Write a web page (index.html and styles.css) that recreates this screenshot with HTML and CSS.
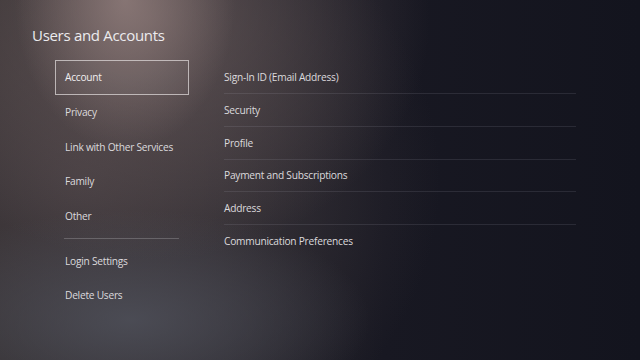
FILE: index.html
```html
<!DOCTYPE html>
<html>
<head>
<meta charset="utf-8">
<link rel="stylesheet" href="styles.css">
</head>
<body>
<div class="screen">
  <h1 class="title">Users and Accounts</h1>
  <div class="content">
    <nav class="menu">
      <div class="menu-item selected">Account</div>
      <div class="menu-item">Privacy</div>
      <div class="menu-item">Link with Other Services</div>
      <div class="menu-item">Family</div>
      <div class="menu-item">Other</div>
      <div class="menu-sep"></div>
      <div class="menu-item">Login Settings</div>
      <div class="menu-item">Delete Users</div>
    </nav>
    <div class="list">
      <div class="row">Sign-In ID (Email Address)</div>
      <div class="row">Security</div>
      <div class="row">Profile</div>
      <div class="row">Payment and Subscriptions</div>
      <div class="row">Address</div>
      <div class="row last">Communication Preferences</div>
    </div>
  </div>
</div>
</body>
</html>
```
FILE: styles.css
```css
html, body {
  margin: 0;
  padding: 0;
}
body {
  width: 640px;
  height: 360px;
  overflow: hidden;
  font-family: "Open Sans", "Noto Sans", sans-serif;
  color: #e6e4e6;
}
.screen {
  width: 640px;
  height: 360px;
  box-sizing: border-box;
  padding: 24px 0 0 32px;
  background:
    radial-gradient(ellipse 110px 150px at 125px 0px, rgba(150,130,128,0.75), rgba(150,130,128,0) 100%),
    radial-gradient(ellipse 280px 240px at 150px 20px, rgba(110,95,95,0.7), rgba(110,95,95,0) 100%),
    radial-gradient(ellipse 240px 110px at 130px 320px, rgba(80,82,92,0.8), rgba(80,82,92,0) 100%),
    radial-gradient(ellipse 360px 320px at 80px 180px, rgba(70,62,66,0.9), rgba(70,62,66,0) 100%),
    linear-gradient(90deg, #2b2829 0%, #24232a 35%, #181822 60%, #13141e 100%);
}
.title {
  margin: 0;
  font-weight: 400;
  font-size: 15px;
  line-height: 22px;
  letter-spacing: -0.3px;
  color: #ecebee;
}
.content {
  display: flex;
  margin-top: 14px;
}
.menu {
  width: 134px;
  margin-left: 23px;
  display: flex;
  flex-direction: column;
}
.menu-item {
  height: 34.7px;
  display: flex;
  align-items: center;
  padding-left: 10px;
  font-size: 10.2px;
  letter-spacing: -0.25px;
  color: #dcdadd;
  box-sizing: border-box;
}
.menu-item.selected {
  border: 1px solid rgba(220,215,215,0.75);
  background: rgba(255,255,255,0.03);
  padding-left: 9px;
  color: #f0eef0;
}
.menu-sep {
  height: 1px;
  margin: 5px 10px 4px 9px;
  background: rgba(200,200,205,0.28);
}
.list {
  margin-left: 35px;
  width: 352px;
  display: flex;
  flex-direction: column;
  margin-top: 1.5px;
}
.row {
  height: 32.7px;
  display: flex;
  align-items: center;
  font-size: 10.2px;
  letter-spacing: -0.25px;
  color: #dcdadd;
  border-bottom: 1px solid rgba(200,200,210,0.12);
  box-sizing: border-box;
}
.row.last {
  border-bottom: none;
}
```
